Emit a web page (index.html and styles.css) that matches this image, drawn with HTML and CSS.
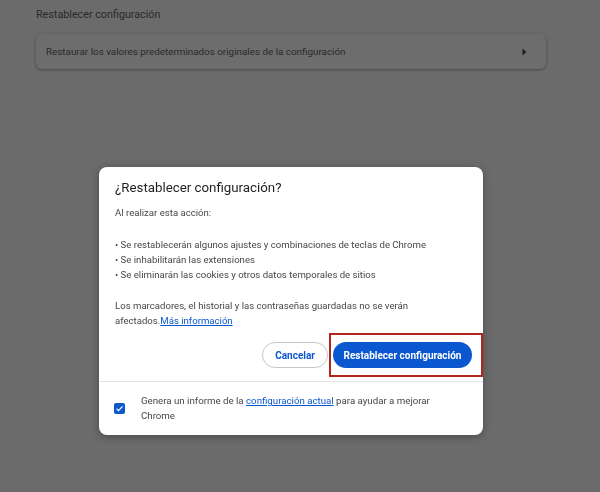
FILE: index.html
```html
<!DOCTYPE html>
<html lang="es">
<head>
<meta charset="utf-8">
<link rel="stylesheet" href="styles.css">
</head>
<body>
<main class="page">
  <h2 class="section-title">Restablecer configuración</h2>
  <div class="card">
    <span>Restaurar los valores predeterminados originales de la configuración</span>
    <svg class="arrow" width="5" height="8" viewBox="0 0 5 8"><path d="M0.5 0.5 L4.5 4 L0.5 7.5 Z" fill="#1f1f1f"/></svg>
  </div>
</main>
<div class="overlay">
  <div class="dialog">
    <div class="body">
      <h1 class="title">¿Restablecer configuración?</h1>
      <p class="text">Al realizar esta acción:</p>
      <ul class="list">
        <li>• Se restablecerán algunos ajustes y combinaciones de teclas de Chrome</li>
        <li>• Se inhabilitarán las extensiones</li>
        <li>• Se eliminarán las cookies y otros datos temporales de sitios</li>
      </ul>
      <p class="text note">Los marcadores, el historial y las contraseñas guardadas no se verán afectados.<a class="link" href="#">Más información</a></p>
      <div class="actions">
        <button class="btn btn-cancel">Cancelar</button>
        <div class="highlight">
          <button class="btn btn-primary">Restablecer configuración</button>
        </div>
      </div>
    </div>
    <div class="footer">
      <span class="checkbox"><svg width="11" height="11" viewBox="0 0 11 11"><path d="M2.6 5.8 L4.5 7.6 L8.5 3.4" fill="none" stroke="#fff" stroke-width="1.2"/></svg></span>
      <p class="footer-text">Genera un informe de la <a class="link" href="#">configuración actual</a> para ayudar a mejorar Chrome</p>
    </div>
  </div>
</div>
</body>
</html>
```

FILE: styles.css
```css
html, body {
  margin: 0;
  padding: 0;
  height: 100%;
}
body {
  background: #6b6b6b;
  font-family: Roboto, "Liberation Sans", sans-serif;
  overflow: hidden;
}
.page {
  padding: 8px 54px 0 36px;
}
.section-title {
  margin: 0 0 12px 0;
  font-size: 10.75px;
  font-weight: 400;
  color: #2a2a2a;
  line-height: 14px;
}
.card {
  display: flex;
  align-items: center;
  justify-content: space-between;
  height: 35px;
  padding: 0 19px 0 10px;
  border-radius: 6px;
  background: #6d6d6d;
  box-shadow: 0 1px 3px rgba(0,0,0,0.35);
  font-size: 9.85px;
  color: #2a2a2a;
}
.arrow { display: block; }
.overlay {
  position: fixed;
  inset: 0;
  display: flex;
  justify-content: center;
  align-items: flex-start;
  padding: 167px 18px 0 0;
}
.dialog {
  width: 384px;
  background: #fff;
  border-radius: 8px;
  box-shadow: 0 2px 8px rgba(0,0,0,0.3);
  overflow: hidden;
}
.body {
  padding: 12px 12px 4px 16px;
}
.title {
  margin: 0;
  font-size: 13.3px;
  font-weight: 400;
  color: #1f1f1f;
  line-height: 18px;
}
.text {
  margin: 8px 0 0 0;
  font-size: 9.6px;
  line-height: 15px;
  color: #474747;
}
.list {
  list-style: none;
  margin: 17px 0 0 0;
  padding: 0;
  font-size: 9.6px;
  line-height: 15px;
  color: #474747;
}
.note {
  margin-top: 16px;
  padding-right: 40px;
}
.link {
  color: #0b57d0;
  text-decoration: underline;
}
.actions {
  display: flex;
  justify-content: flex-end;
  align-items: center;
  margin-top: 5px;
}
.btn {
  font-family: inherit;
  font-size: 10px;
  font-weight: 700;
  height: 26px;
  border-radius: 13px;
  padding: 0 12px;
  cursor: pointer;
}
.btn-cancel {
  background: #fff;
  color: #0b57d0;
  border: 1px solid #c7c7c7;
  margin-right: 1px;
}
.highlight {
  border: 2px solid #b3261e;
  padding: 7px 9px 7px 2px;
  margin-right: -12px;
}
.btn-primary {
  background: #0b57d0;
  color: #fff;
  border: none;
  width: 139px;
  padding: 0;
}
.footer {
  display: flex;
  align-items: flex-start;
  border-top: 1px solid #e3e3e3;
  padding: 11px 36px 12px 15px;
  gap: 16px;
}
.checkbox {
  flex: none;
  width: 11px;
  height: 11px;
  margin-top: 10px;
  border-radius: 2px;
  background: #0b57d0;
  display: flex;
}
.footer-text {
  margin: 0;
  font-size: 9.7px;
  line-height: 15px;
  color: #474747;
}
```
